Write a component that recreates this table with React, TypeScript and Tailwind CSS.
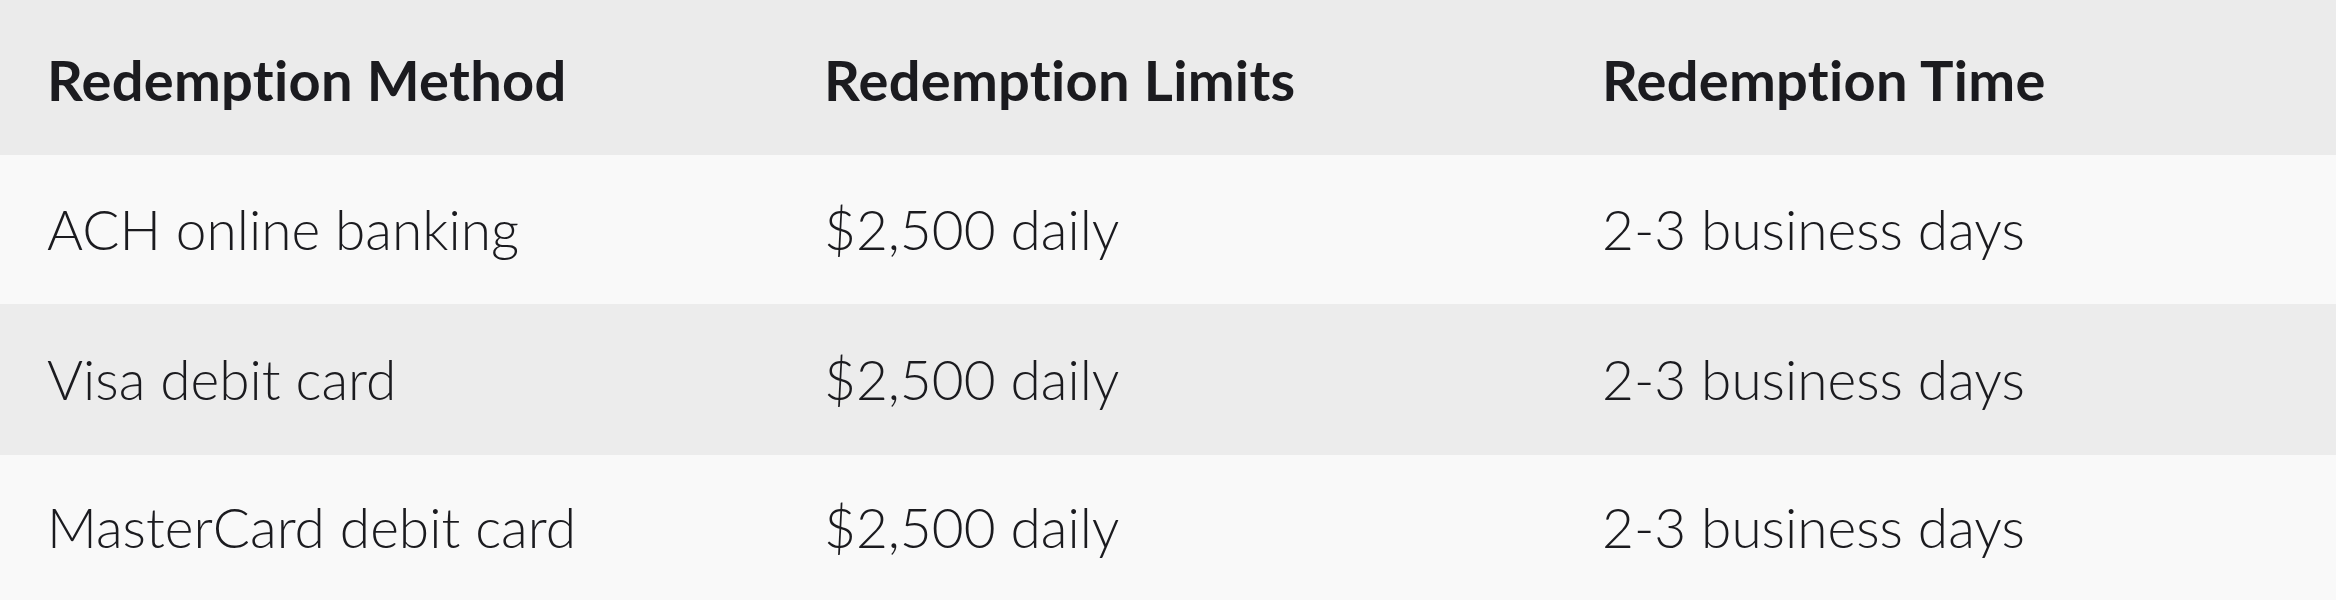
const rows = [
  ['ACH online banking', '$2,500 daily', '2-3 business days'],
  ['Visa debit card', '$2,500 daily', '2-3 business days'],
  ['MasterCard debit card', '$2,500 daily', '2-3 business days'],
]

const heights = ['h-[149px]', 'h-[151px]', 'h-[145px]']

export default function App() {
  return (
    <div className="w-[2336px] h-[600px] bg-[#f8f8f8] text-[#1b1b1f] font-['Lato',sans-serif]">
      <div className="grid grid-cols-[777px_778px_1fr] h-[155px] items-center pt-[5px] bg-[#ebebeb] text-[56px] font-bold tracking-[0.3px]">
        <div className="pl-[47px]">Redemption Method</div>
        <div className="pl-[47px]">Redemption Limits</div>
        <div className="pl-[47px]">Redemption Time</div>
      </div>
      {rows.map((r, i) => (
        <div
          key={i}
          className={`grid grid-cols-[777px_778px_1fr] items-center text-[55px] font-light ${heights[i]} ${i % 2 === 1 ? 'bg-[#ececec]' : 'bg-[#f9f9f9]'}`}
        >
          {r.map((c, j) => (
            <div key={j} className="pl-[47px]">{c}</div>
          ))}
        </div>
      ))}
    </div>
  )
}
